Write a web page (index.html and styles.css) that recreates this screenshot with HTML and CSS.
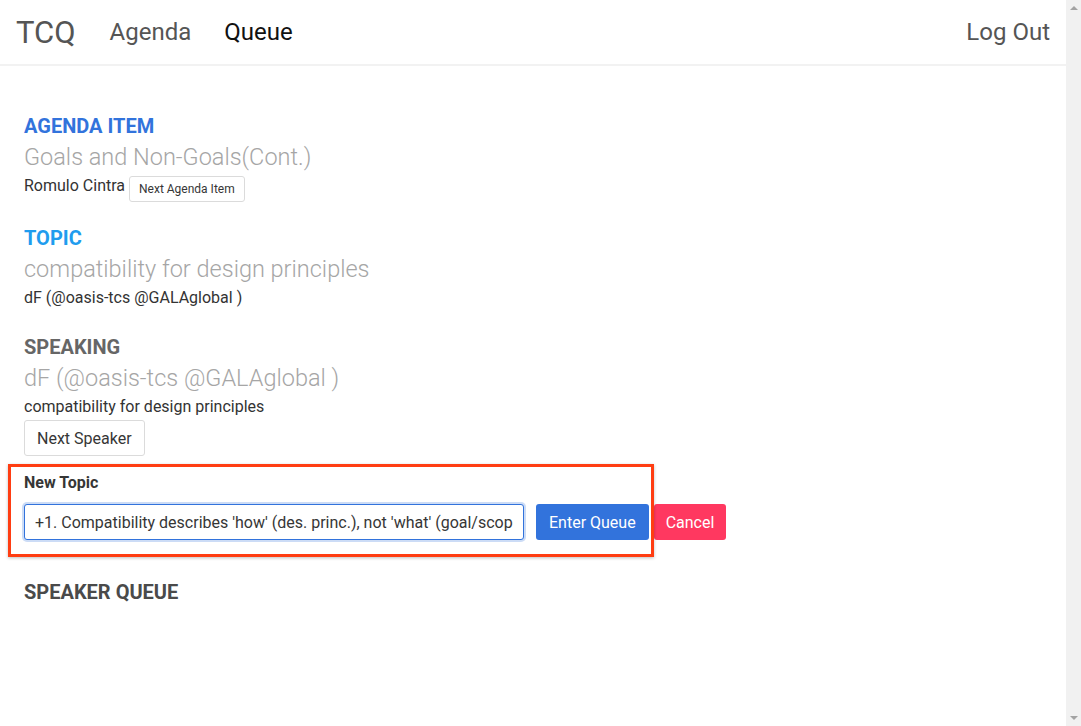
FILE: index.html
```html
<!DOCTYPE html>
<html lang="en">
<head>
<meta charset="utf-8">
<title>TCQ</title>
<link rel="stylesheet" href="styles.css">
</head>
<body>
<div class="page">
<nav class="navbar">
  <div class="nav-left">
    <a class="brand">TCQ</a>
    <a class="nav-item">Agenda</a>
    <a class="nav-item active">Queue</a>
  </div>
  <a class="nav-item logout">Log Out</a>
</nav>
<main class="content">
  <section class="block block-agenda">
    <h2 class="label label-link">AGENDA ITEM</h2>
    <p class="title">Goals and Non-Goals(Cont.)</p>
    <div class="meta meta-row"><span>Romulo Cintra</span><button class="btn btn-small">Next Agenda Item</button></div>
  </section>
  <section class="block block-topic">
    <h2 class="label label-info">TOPIC</h2>
    <p class="title">compatibility for design principles</p>
    <div class="meta">dF (@oasis-tcs @GALAglobal )</div>
  </section>
  <section class="block block-speaking">
    <h2 class="label label-dark">SPEAKING</h2>
    <p class="title">dF (@oasis-tcs @GALAglobal )</p>
    <div class="meta">compatibility for design principles</div>
    <button class="btn btn-normal">Next Speaker</button>
  </section>
  <section class="new-topic">
    <div class="highlight"></div>
    <label class="field-label">New Topic</label>
    <div class="field-row">
      <input class="input" type="text" value="+1. Compatibility describes 'how' (des. princ.), not 'what' (goal/scope)">
      <button class="btn btn-link">Enter Queue</button>
      <button class="btn btn-danger">Cancel</button>
    </div>
  </section>
  <h2 class="label label-queue">SPEAKER QUEUE</h2>
</main>
</div>
<div class="scrollbar">
  <span class="arrow arrow-up"></span>
  <span class="arrow arrow-down"></span>
</div>
</body>
</html>
```
FILE: styles.css
```css
body {
  margin: 0;
  font-family: Roboto, "Liberation Sans", sans-serif;
  color: #4a4a4a;
  background: #fff;
}
.page {
  margin-right: 15px;
}
.scrollbar {
  position: fixed;
  top: 0;
  right: 0;
  bottom: 0;
  width: 15px;
  background: #f1f1f1;
  display: flex;
  flex-direction: column;
  justify-content: space-between;
  align-items: center;
  padding: 6px 0;
  box-sizing: border-box;
}
.arrow {
  width: 0;
  height: 0;
  border-left: 4px solid transparent;
  border-right: 4px solid transparent;
}
.arrow-up {
  border-bottom: 4px solid #a3a3a3;
}
.arrow-down {
  border-top: 4px solid #a3a3a3;
}
.navbar {
  height: 64px;
  border-bottom: 2px solid #f2f2f2;
  display: flex;
  align-items: center;
  justify-content: space-between;
  padding: 0 16px;
}
.nav-left {
  display: flex;
  align-items: center;
}
.brand {
  font-size: 31px;
  color: #555;
  margin-right: 34px;
}
.nav-item {
  font-size: 24px;
  color: #555;
  margin-right: 33px;
}
.nav-item.active {
  color: #111;
}
.logout {
  margin-right: 0;
  color: #555;
}
.content {
  padding: 48px 24px 0;
}
.label {
  margin: 0;
  font-size: 20px;
  line-height: 24px;
  font-weight: 700;
}
.label-link { color: #3273dc; }
.label-info { color: #209cee; }
.label-dark { color: #666; }
.label-queue { color: #4a4a4a; margin-top: 40px; }
.title {
  margin: 4px 0 0;
  font-family: "Roboto Light", Roboto, "Liberation Sans", sans-serif;
  font-size: 23.5px;
  line-height: 30px;
  font-weight: 300;
  color: #a6a6a6;
}
.meta {
  margin-top: 2px;
  font-size: 16px;
  line-height: 24px;
  color: #333;
}
.meta-row {
  display: flex;
  align-items: flex-start;
  gap: 4px;
}
.block-agenda { margin-bottom: 24px; }
.block-topic { margin-bottom: 25px; }
.block-speaking { margin-bottom: 15px; }
.btn {
  font-family: Roboto, "Liberation Sans", sans-serif;
  border-radius: 3px;
  cursor: pointer;
}
.btn-small {
  margin-top: 2px;
  font-size: 12px;
  height: 26px;
  padding: 0 9px;
  background: #fff;
  border: 1px solid #dbdbdb;
  color: #363636;
}
.btn-normal {
  display: block;
  margin-top: 1px;
  font-size: 16px;
  height: 36px;
  padding: 0 12px;
  background: #fff;
  border: 1px solid #dbdbdb;
  color: #363636;
}
.new-topic {
  position: relative;
}
.highlight {
  position: absolute;
  left: -16px;
  top: -7px;
  width: 646px;
  height: 93px;
  box-sizing: border-box;
  border: 3px solid #ff3d12;
  box-shadow: 0 1px 3px rgba(0,0,0,0.25);
  pointer-events: none;
}
.field-label {
  display: block;
  font-size: 16px;
  font-weight: 700;
  color: #363636;
  line-height: 24px;
}
.field-row {
  margin-top: 9px;
  display: flex;
  align-items: center;
}
.input {
  box-sizing: border-box;
  width: 500px;
  height: 36px;
  font-family: Roboto, "Liberation Sans", sans-serif;
  font-size: 16px;
  color: #363636;
  padding: 0 10px;
  border: 1px solid #3273dc;
  border-radius: 3px;
  box-shadow: 0 0 0 2px rgba(50,115,220,0.25);
  outline: none;
}
.btn-link {
  margin-left: 12px;
  height: 36px;
  font-size: 16px;
  padding: 0 13px;
  background: #3273dc;
  color: #fff;
  border: none;
}
.btn-danger {
  margin-left: 5px;
  height: 36px;
  font-size: 16px;
  padding: 0 12px;
  background: #ff3860;
  color: #fff;
  border: none;
}
```
